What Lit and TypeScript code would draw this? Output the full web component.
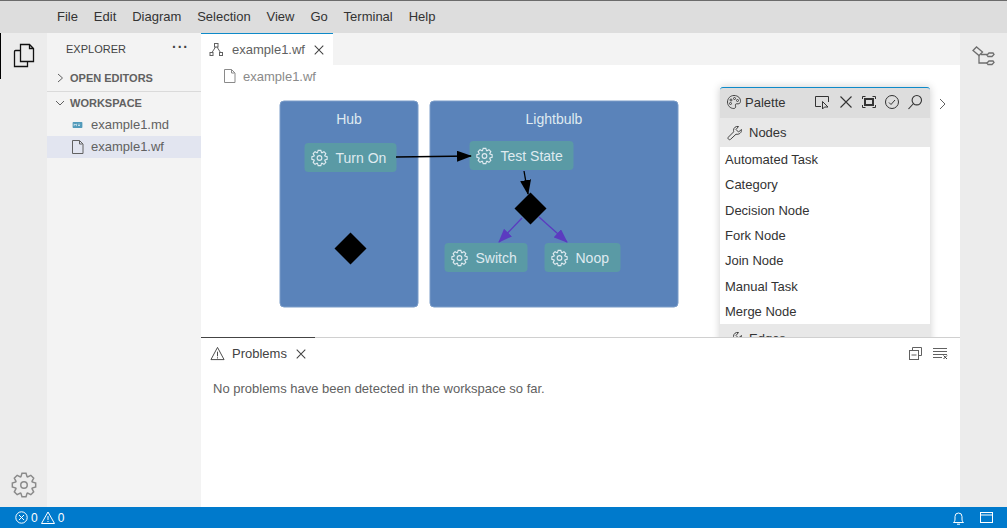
import { LitElement, html, css, svg } from 'lit';
import { customElement } from 'lit/decorators.js';

// eight toothed cog outline, centred on 8,8 in a 16 box
const gearPath = () => {
  const pts: string[] = [];
  for (let i = 0; i < 8; i++) {
    const a = (i * Math.PI) / 4;
    for (const [r, off] of [[5.4, -0.36], [7.3, -0.17], [7.3, 0.17], [5.4, 0.36]]) {
      const x = 8 + r * Math.sin(a + off);
      const y = 8 - r * Math.cos(a + off);
      pts.push(`${x.toFixed(2)} ${y.toFixed(2)}`);
    }
  }
  return `M${pts.join('L')}z`;
};
const GEAR = gearPath();
const FILE = 'M2.5 1.5h7l3.5 3.5v9.5h-10.5zM9.5 1.5v3.5h3';
const CLOSE = 'M2 2l10 10M12 2L2 12';
const WRENCH = 'M14.5 4.5l-3 2.5-2.5-2.5 2.5-3C9 1 6.5 2.5 6.5 5.5c0 .5 0 1 .2 1.3L1.5 12c-.7.8-.7 1.5 0 2.2s1.5.7 2.2 0l5.3-5c3 .7 6-1.7 5.5-4.7z';

const gear = (x: number, y: number, size: number) => svg`
  <g transform="translate(${x} ${y}) scale(${size / 16})" fill="none" stroke="#dfeaf0" stroke-width="1.05">
    <path d=${GEAR}></path><circle cx="8" cy="8" r="2.2"></circle>
  </g>`;

const flowNode = (x: number, y: number, w: number, label: string) => svg`
  <rect x=${x} y=${y} width=${w} height="29" rx="4" fill="#5a9aa5"></rect>
  ${gear(x + 6.5, y + 6.5, 17)}
  <text x=${x + 31} y=${y + 19.5} class="node-label">${label}</text>`;

const PALETTE_ITEMS = ['Automated Task', 'Category', 'Decision Node', 'Fork Node', 'Join Node', 'Manual Task', 'Merge Node'];
const MENUS = ['File', 'Edit', 'Diagram', 'Selection', 'View', 'Go', 'Terminal', 'Help'];

@customElement('app-root')
export class AppRoot extends LitElement {
  static styles = css`
    :host {
      display: flex;
      flex-direction: column;
      width: 1007px;
      height: 528px;
      overflow: hidden;
      font-family: "Liberation Sans", Arial, sans-serif;
      font-size: 13px;
      color: #616161;
      background: #fff;
    }
    svg { display: block; flex: none; }
    .menubar {
      flex: none;
      height: 33px;
      box-sizing: border-box;
      border-top: 1px solid #6b6b6b;
      background: #dddddd;
      display: flex;
      align-items: center;
      padding: 0 0 2px 57px;
      gap: 15.9px;
      color: #333;
    }
    .body { flex: 1; display: flex; min-height: 0; }
    .activity {
      width: 47px;
      flex: none;
      background: #ececec;
      display: flex;
      flex-direction: column;
      justify-content: space-between;
      align-items: center;
      box-sizing: border-box;
      padding-bottom: 9px;
    }
    .activity .active {
      width: 47px;
      height: 46px;
      box-sizing: border-box;
      border-left: 1px solid #000;
      display: flex;
      align-items: center;
      justify-content: center;
      padding-right: 1px;
    }
    .sidebar { width: 154px; flex: none; background: #f3f3f3; color: #616161; }
    .side-title {
      height: 32px;
      display: flex;
      align-items: center;
      justify-content: space-between;
      padding: 0 12px 0 19px;
      font-size: 11px;
      color: #424242;
    }
    .dots { font-size: 14px; font-weight: 700; letter-spacing: 1px; line-height: 10px; margin-top: -4px; }
    .section {
      height: 26px;
      display: flex;
      align-items: center;
      gap: 5px;
      padding-left: 8px;
      font-size: 11px;
      font-weight: 700;
      color: #616161;
      box-sizing: border-box;
    }
    .section.open { border-top: 1px solid #dadada; height: 23px; }
    .file {
      height: 22px;
      box-sizing: border-box;
      padding: 0 0 1px 24px;
      display: flex;
      align-items: center;
      gap: 7px;
      color: #616161;
    }
    .file.selected { background: #e2e5f0; }
    .file .slot { width: 13px; display: flex; justify-content: center; }
    .main { flex: 1; min-width: 0; display: flex; flex-direction: column; }
    .tabs { height: 32px; flex: none; background: #f3f3f3; display: flex; }
    .tab {
      width: 132px;
      box-sizing: border-box;
      background: #fff;
      border-top: 1px solid #0e8ac9;
      display: flex;
      align-items: center;
      padding-left: 8px;
      gap: 8px;
      color: #616161;
    }
    .editor { flex: 1; position: relative; overflow: hidden; min-height: 0; }
    .crumb {
      height: 22px;
      display: flex;
      align-items: center;
      gap: 6px;
      padding-left: 21px;
      color: #8a8a8a;
    }
    .canvas { position: absolute; left: 0; top: 0; }
    .node-label { font-size: 14px; fill: #dfeaf0; }
    .title-label { font-size: 14px; fill: #dfeaf0; text-anchor: middle; }
    .palette {
      position: absolute;
      left: 519px;
      top: 22px;
      width: 210px;
      box-shadow: 0 0 8px rgba(0, 0, 0, 0.2);
      background: #fff;
      color: #333;
    }
    .palette-head {
      height: 31px;
      background: #dddddd;
      border-top: 1px solid #0e8ac9;
      border-radius: 3px 3px 0 0;
      box-sizing: border-box;
      display: flex;
      align-items: center;
      padding: 0 7px 2px 6px;
      gap: 3px;
    }
    .palette-tools { margin-left: auto; display: flex; align-items: center; gap: 7px; }
    .group {
      height: 29px;
      background: #e8e8e8;
      display: flex;
      align-items: center;
      gap: 6px;
      padding-left: 7px;
    }
    .item { height: 25.3px; display: flex; align-items: center; padding-left: 5px; color: #333; }
    .expander { position: absolute; left: 737px; top: 33px; }
    .panel { height: 170px; flex: none; border-top: 1px solid #d0d0d0; box-sizing: border-box; background: #fff; position: relative; }
    .panel-mark { position: absolute; left: 0; top: -1px; width: 114px; height: 1px; background: #444; }
    .panel-head { height: 31px; display: flex; align-items: center; padding-left: 9px; gap: 7px; color: #424242; }
    .panel-close { margin-left: 1px; }
    .panel-actions { margin-left: auto; margin-right: 12px; display: flex; gap: 11px; align-items: center; }
    .panel-msg { padding: 12px 0 0 12px; color: #616161; }
    .rightbar { width: 47px; flex: none; background: #ececec; display: flex; justify-content: center; padding-top: 13px; box-sizing: border-box; }
    .status {
      height: 21px;
      flex: none;
      background: #007acc;
      color: #fff;
      display: flex;
      align-items: center;
      padding: 0 14px 0 15px;
      font-size: 12px;
      gap: 3px;
    }
    .status-right { margin-left: auto; display: flex; gap: 15px; align-items: center; }
  `;

  private fileIcon(stroke = '#616161') {
    return html`<svg width="15" height="16" viewBox="0 0 15 16" fill="none" stroke=${stroke}><path d=${FILE}></path></svg>`;
  }

  private chevron(d: string) {
    return html`<svg width="10" height="10" viewBox="0 0 10 10" fill="none" stroke="#616161"><path d=${d}></path></svg>`;
  }

  private diagram() {
    return html`<svg class="canvas" width="759" height="272" viewBox="201 65 759 272">
      <defs>
        <marker id="arrow-black" markerWidth="15" markerHeight="11" refX="14" refY="5.5" orient="auto" markerUnits="userSpaceOnUse">
          <path d="M0 0L15 5.5L0 11z" fill="#000"></path>
        </marker>
        <marker id="arrow-purple" markerWidth="14" markerHeight="11" refX="13" refY="5.5" orient="auto" markerUnits="userSpaceOnUse">
          <path d="M0 0L14 5.5L0 11z" fill="#5b3bc0"></path>
        </marker>
      </defs>
      <rect x="280" y="101" width="138" height="206" rx="4" fill="#5a83ba" stroke="#7a9cc8"></rect>
      <rect x="430" y="101" width="248" height="206" rx="4" fill="#5a83ba" stroke="#7a9cc8"></rect>
      <text x="349" y="123.5" class="title-label">Hub</text>
      <text x="554" y="123.5" class="title-label">Lightbulb</text>
      ${flowNode(304.5, 143, 92, 'Turn On')}
      ${flowNode(469.5, 141, 104, 'Test State')}
      ${flowNode(444.5, 243, 83, 'Switch')}
      ${flowNode(544.5, 243, 76, 'Noop')}
      <path d="M350.5 232.5L366.5 248.5L350.5 264.5L334.5 248.5z" fill="#000"></path>
      <path d="M530.5 192.5L546.5 208.5L530.5 224.5L514.5 208.5z" fill="#000"></path>
      <path d="M396 157L471 156" stroke="#000" stroke-width="1.3" marker-end="url(#arrow-black)"></path>
      <path d="M524 171L528 194" stroke="#000" stroke-width="1.3" marker-end="url(#arrow-black)"></path>
      <path d="M522 218L499 242" stroke="#5b3bc0" stroke-width="1.3" marker-end="url(#arrow-purple)"></path>
      <path d="M539 217L567 242" stroke="#5b3bc0" stroke-width="1.3" marker-end="url(#arrow-purple)"></path>
    </svg>`;
  }

  private palette() {
    return html`<div class="palette">
      <div class="palette-head">
        <svg width="16" height="16" viewBox="0 0 16 16" fill="none" stroke="#424242">
          <path d="M8 1.5c4 0 6.7 2.600 6.5 6-.1 2-2 2.600-3.500 2.300-1.300-.2-2 .8-1.500 2 .5 1.400-.2 2.700-1.700 2.700-3.700 0-6.300-3-6.300-6.500S4.200 1.500 8 1.500z"></path>
          <circle cx="5" cy="6" r="1"></circle><circle cx="8.5" cy="4.5" r="1"></circle><circle cx="11.5" cy="6.5" r="1"></circle><circle cx="4.5" cy="9.5" r="1"></circle>
        </svg>
        <span>Palette</span>
        <div class="palette-tools">
          <svg width="16" height="16" viewBox="0 0 16 16" fill="none" stroke="#333"><path d="M6 12.5H.5v-10h13V8M7.5 7.5V15l2-2H13z"></path></svg>
          <svg width="16" height="16" viewBox="0 0 16 16" fill="none" stroke="#333" stroke-width="1.1"><path d="M2.500 2.500l11 11M13.500 2.500l-11 11"></path></svg>
          <svg width="16" height="16" viewBox="0 0 16 16" fill="none" stroke="#333"><path d="M1.500 5V2.500h3M11.500 2.500h3V5M1.500 11v2.500h3M11.500 13.500h3V11"></path><rect x="4" y="5" width="8" height="6" stroke-width="2"></rect></svg>
          <svg width="16" height="16" viewBox="0 0 16 16" fill="none" stroke="#333"><circle cx="8" cy="8" r="6.5"></circle><path d="M5 8.500l2 2 4-4.500"></path></svg>
          <svg width="16" height="16" viewBox="0 0 16 16" fill="none" stroke="#333" stroke-width="1.1"><circle cx="9.8" cy="6.2" r="4.7"></circle><path d="M6.500 9.500L1.500 15"></path></svg>
        </div>
      </div>
      <div class="group">
        <svg width="16" height="16" viewBox="0 0 16 16" fill="none" stroke="#424242"><path d=${WRENCH}></path></svg>
        <span>Nodes</span>
      </div>
      ${PALETTE_ITEMS.map((item) => html`<div class="item">${item}</div>`)}
      <div class="group">
        <svg width="16" height="16" viewBox="0 0 16 16" fill="none" stroke="#424242"><path d=${WRENCH}></path></svg>
        <span>Edges</span>
      </div>
    </div>`;
  }

  render() {
    return html`
      <div class="menubar">${MENUS.map((m) => html`<span>${m}</span>`)}</div>
      <div class="body">
        <div class="activity">
          <div class="active">
            <svg width="24" height="26" viewBox="0 0 24 26" fill="none" stroke="#111" stroke-width="1.3">
              <path d="M8.500 1.500h9l4 4v13h-13zM17.500 1.500v4h4"></path>
              <path d="M8.500 7.500h-5a1 1 0 0 0-1 1v15h13v-5"></path>
            </svg>
          </div>
          <svg width="26" height="26" viewBox="0 0 16 16" fill="none" stroke="#8a8a8a" stroke-width="0.9">
            <path d=${GEAR}></path><circle cx="8" cy="8" r="2"></circle>
          </svg>
        </div>
        <div class="sidebar">
          <div class="side-title"><span>EXPLORER</span><span class="dots">···</span></div>
          <div class="section">${this.chevron('M3 1l4.500 4L3 9')}<span>OPEN EDITORS</span></div>
          <div class="section open">${this.chevron('M1 3l4 4 4-4')}<span>WORKSPACE</span></div>
          <div class="file">
            <span class="slot"><svg width="11" height="6" viewBox="0 0 13 8"><rect width="13" height="8" rx="1" fill="#519aba"></rect><path d="M2 5.500V2.500l1.500 1.500L5 2.500v3M8.500 2v3M7 3.800l1.500 1.500L10 3.800" fill="none" stroke="#fff" stroke-width="0.8"></path></svg></span>
            <span>example1.md</span>
          </div>
          <div class="file selected"><span class="slot">${this.fileIcon()}</span><span>example1.wf</span></div>
        </div>
        <div class="main">
          <div class="tabs">
            <div class="tab">
              <svg width="15" height="15" viewBox="0 0 15 15" fill="none" stroke="#616161"><rect x="5.500" y="1.500" width="3.500" height="3.500"></rect><rect x="1" y="10.500" width="3" height="3"></rect><rect x="10.500" y="10.500" width="3" height="3"></rect><path d="M6.500 5L3 10.500M8 5l3.500 5.500"></path></svg>
              <span>example1.wf</span>
              <svg width="12" height="12" viewBox="0 0 14 14" fill="none" stroke="#424242" stroke-width="1.2"><path d=${CLOSE}></path></svg>
            </div>
          </div>
          <div class="editor">
            ${this.diagram()}
            <div class="crumb">${this.fileIcon('#8a8a8a')}<span>example1.wf</span></div>
            ${this.palette()}
            <svg class="expander" width="10" height="12" viewBox="0 0 10 12" fill="none" stroke="#616161"><path d="M2 1l5 5-5 5"></path></svg>
          </div>
          <div class="panel">
            <div class="panel-mark"></div>
            <div class="panel-head">
              <svg width="15" height="15" viewBox="0 0 16 16" fill="none" stroke="#424242"><path d="M8 1.500L15 14.500H1zM8 6v5M8 12v1.300"></path></svg>
              <span>Problems</span>
              <svg class="panel-close" width="12" height="12" viewBox="0 0 14 14" fill="none" stroke="#424242" stroke-width="1.2"><path d=${CLOSE}></path></svg>
              <div class="panel-actions">
                <svg width="13" height="13" viewBox="0 0 13 13" fill="none" stroke="#616161"><path d="M3.500 3V.5h9v8H10"></path><rect x="0.500" y="3.500" width="9" height="9"></rect><path d="M2.500 8h5"></path></svg>
                <svg width="15" height="13" viewBox="0 0 15 13" fill="none" stroke="#616161"><path d="M0 1.500h14M0 4.500h14M0 7.500h14M0 10.500h9"></path><path d="M10.500 8.500l3.500 3.500M14 8.500L10.500 12" stroke="#424242"></path></svg>
              </div>
            </div>
            <div class="panel-msg">No problems have been detected in the workspace so far.</div>
          </div>
        </div>
        <div class="rightbar">
          <svg width="24" height="24" viewBox="0 0 24 24" fill="none" stroke="#6e6e6e" stroke-width="1.3">
            <path d="M1 4.500L4.500 1l6 5L7 9.500z"></path>
            <path d="M15 9L17 7h4l1 1.500-2 2h-4zM15 17l2-2h4l1 1.500-2 2h-4z"></path>
            <path d="M7 9.500V17h8M9 8.500h6"></path>
          </svg>
        </div>
      </div>
      <div class="status">
        <svg width="13" height="13" viewBox="0 0 13 13" fill="none" stroke="#fff"><circle cx="6.500" cy="6.500" r="5.700"></circle><path d="M4 4l5 5M9 4l-5 5"></path></svg>
        <span>0</span>
        <svg width="14" height="13" viewBox="0 0 14 13" fill="none" stroke="#fff"><path d="M7 1L13.500 12.500H.5zM7 5v4M7 10v1"></path></svg>
        <span>0</span>
        <div class="status-right">
          <svg width="13" height="14" viewBox="0 0 13 14" fill="none" stroke="#fff"><path d="M1.500 11.500c1-1 1.500-1.500 1.500-3.500V5.500a3.500 3.500 0 0 1 7 0V8c0 2 .5 2.500 1.500 3.500zM5 13.200h3"></path></svg>
          <svg width="13" height="13" viewBox="0 0 13 13" fill="none" stroke="#fff"><rect x="0.500" y="1.500" width="12" height="10"></rect><path d="M0.500 4h12"></path></svg>
        </div>
      </div>
    `;
  }
}
